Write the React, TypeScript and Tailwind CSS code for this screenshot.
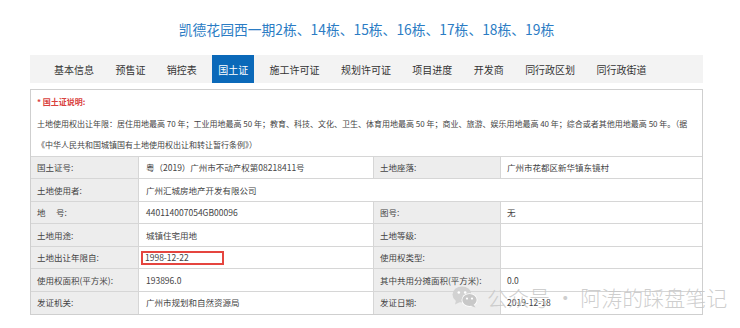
import React from "react";

const tabs = [
  "基本信息",
  "预售证",
  "销控表",
  "国土证",
  "施工许可证",
  "规划许可证",
  "项目进度",
  "开发商",
  "同行政区划",
  "同行政街道",
];

type Row = { l1: string; v1: React.ReactNode; l2?: string; v2?: string };

const rows: Row[] = [
  { l1: "国土证号:", v1: "粤（2019）广州市不动产权第08218411号", l2: "土地座落:", v2: "广州市花都区新华镇东镜村" },
  { l1: "土地使用者:", v1: "广州汇城房地产开发有限公司" },
  { l1: "地　 号:", v1: "440114007054GB00096", l2: "图号:", v2: "无" },
  { l1: "土地用途:", v1: "城镇住宅用地", l2: "土地等级:", v2: "" },
  {
    l1: "土地出让年限自:",
    v1: (
      <span className="-ml-[5px] inline-flex h-[14px] w-[83px] items-center border-2 border-[#e5453f] pl-[2px]">
        1998-12-22
      </span>
    ),
    l2: "使用权类型:",
    v2: "",
  },
  { l1: "使用权面积(平方米):", v1: "193896.0", l2: "其中共用分摊面积(平方米):", v2: "0.0" },
  { l1: "发证机关:", v1: "广州市规划和自然资源局", l2: "发证日期:", v2: "2019-12-18" },
];

function WeChatIcon() {
  return (
    <svg width="26" height="22" viewBox="0 0 26 22" className="shrink-0">
      <ellipse cx="10" cy="8.5" rx="9.5" ry="8" fill="#d2d2d2" />
      <path d="M4 14.5 L3 18.5 L8 16 Z" fill="#d2d2d2" />
      <circle cx="6.8" cy="6.5" r="1.3" fill="#fff" />
      <circle cx="13.2" cy="6.5" r="1.3" fill="#fff" />
      <ellipse cx="17.5" cy="14" rx="8" ry="6.8" fill="#fff" />
      <ellipse cx="17.5" cy="14" rx="7.2" ry="6" fill="#c8c8c8" />
      <path d="M21.5 18.5 L23.5 21.5 L18.5 19.8 Z" fill="#c8c8c8" />
      <circle cx="15" cy="12.6" r="1.1" fill="#fff" />
      <circle cx="20" cy="12.6" r="1.1" fill="#fff" />
    </svg>
  );
}

export default function App() {
  return (
    <div className="relative h-[328px] w-[740px] overflow-hidden bg-white font-['Noto_Sans_CJK_SC',sans-serif] text-[#444]">
      {/* Title */}
      <div className="ml-[30px] flex h-[55px] w-[673px] items-center justify-center pt-[3px] text-[13.8px] text-[#2b7cc4]">
        凯德花园西一期2栋、14栋、15栋、16栋、17栋、18栋、19栋
      </div>

      {/* Tabs */}
      <div className="ml-[30px] flex h-[28px] w-[673px] items-stretch gap-[9.4px] bg-[#f3f3f3] pl-[18px] text-[10px] text-[#333]">
        {tabs.map((t) => (
          <div
            key={t}
            className={`flex items-center px-[6px] ${t === "国土证" ? "bg-[#0b69b9] text-white" : ""}`}
          >
            {t}
          </div>
        ))}
      </div>

      {/* Content box */}
      <div className="ml-[30px] mt-[6px] w-[673px] border border-[#cfcfcf]">
        <div className="pt-[1px] pl-[6px] text-[8px] leading-[21.5px] text-[#444]">
          <div className="font-bold text-[#d9413d]">* 国土证说明:</div>
          <div className="whitespace-nowrap">
            土地使用权出让年限：居住用地最高 70 年；工业用地最高 50 年；教育、科技、文化、卫生、体育用地最高 50 年；商业、旅游、娱乐用地最高 40 年；综合或者其他用地最高 50 年。（据
          </div>
          <div className="whitespace-nowrap">《中华人民共和国城镇国有土地使用权出让和转让暂行条例》）</div>
        </div>

        <div className="grid grid-cols-[107px_235px_127px_202px] text-[8.5px]">
          {rows.map((r, i) => (
            <React.Fragment key={i}>
              <div className="flex h-[22.6px] items-center border-t border-[#d6d6d6] bg-[#ededed] pl-[6px]">
                {r.l1}
              </div>
              {r.l2 === undefined ? (
                <div className="col-span-3 flex h-[22.6px] items-center border-l border-t border-[#d6d6d6] pl-[7px]">
                  {r.v1}
                </div>
              ) : (
                <>
                  <div className="flex h-[22.6px] items-center border-l border-t border-[#d6d6d6] pl-[7px]">
                    {r.v1}
                  </div>
                  <div className="flex h-[22.6px] items-center border-l border-t border-[#d6d6d6] bg-[#ededed] pl-[6px]">
                    {r.l2}
                  </div>
                  <div className="flex h-[22.6px] items-center border-l border-t border-[#d6d6d6] pl-[6px]">
                    {r.v2}
                  </div>
                </>
              )}
            </React.Fragment>
          ))}
        </div>
      </div>

      {/* Watermark */}
      <div className="pointer-events-none absolute left-[452px] top-[286px] flex items-center gap-[9px] text-[21px] font-light leading-none text-[#c6c6c6]/85">
        <WeChatIcon />
        <span className="whitespace-nowrap">公众号 · 阿涛的踩盘笔记</span>
      </div>
    </div>
  );
}
